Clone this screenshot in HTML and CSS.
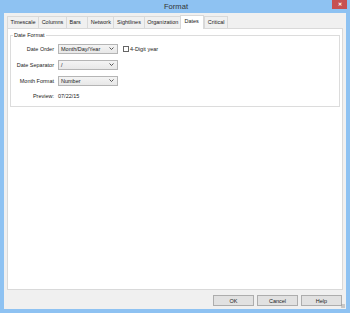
FILE: index.html
```html
<!DOCTYPE html>
<html>
<head>
    <title>Format</title>
    <meta charset="UTF-8">
    <link rel="stylesheet" href="styles.css">
</head>
<body>
    <div class="window">
        <div class="titlebar">
            <span></span>
            <span class="title">Format</span>
            <span class="close">&#x2715;</span>
        </div>
        <div class="client">
            <div class="tabs">
                <div class="tab">Timescale</div>
                <div class="tab">Columns</div>
                <div class="tab">Bars</div>
                <div class="tab">Network</div>
                <div class="tab">Sightlines</div>
                <div class="tab">Organization</div>
                <div class="tab active">Dates</div>
                <div class="tab">Critical</div>
            </div>
            <div class="panel">
                <fieldset class="group">
                    <legend>Date Format</legend>
                    <div class="row first">
                        <label class="lbl">Date Order</label>
                        <div class="combo">
                            <span>Month/Day/Year</span>
                            <svg class="chev" width="5" height="3" viewBox="0 0 5 3"><polyline points="0.5,0.5 2.5,2.5 4.5,0.5" fill="none" stroke="#444" stroke-width="0.9"/></svg>
                        </div>
                        <span class="check"><span class="box"></span>4-Digit year</span>
                    </div>
                    <div class="row">
                        <label class="lbl">Date Separator</label>
                        <div class="combo">
                            <span>/</span>
                            <svg class="chev" width="5" height="3" viewBox="0 0 5 3"><polyline points="0.5,0.5 2.5,2.5 4.5,0.5" fill="none" stroke="#444" stroke-width="0.9"/></svg>
                        </div>
                    </div>
                    <div class="row">
                        <label class="lbl">Month Format</label>
                        <div class="combo">
                            <span>Number</span>
                            <svg class="chev" width="5" height="3" viewBox="0 0 5 3"><polyline points="0.5,0.5 2.5,2.5 4.5,0.5" fill="none" stroke="#444" stroke-width="0.9"/></svg>
                        </div>
                    </div>
                    <div class="row preview">
                        <label class="lbl">Preview:</label>
                        <span>07/22/15</span>
                    </div>
                </fieldset>
            </div>
            <div class="footer">
                <button class="btn">OK</button>
                <button class="btn">Cancel</button>
                <button class="btn">Help</button>
                <span class="grip"></span>
            </div>
        </div>
    </div>
</body>
</html>
```

FILE: styles.css
```css
body {
    margin: 0;
    background: #8ec2f2;
    font-family: 'Liberation Sans', Arial, sans-serif;
    font-size: 5.5px;
    color: #222;
}
.window {
    width: 350px;
    height: 313px;
    display: flex;
    flex-direction: column;
}
.titlebar {
    height: 13px;
    flex: none;
    display: grid;
    grid-template-columns: 1fr auto 1fr;
    align-items: start;
}
.title {
    font-size: 7.6px;
    color: #333;
    line-height: 14px;
    padding-left: 2px;
}
.close {
    justify-self: end;
    width: 15px;
    height: 9px;
    margin-right: 3px;
    background: #c75050;
    color: #fff;
    font-size: 5px;
    font-weight: bold;
    line-height: 9px;
    text-align: center;
}
.client {
    flex: 1;
    margin: 0 4px 4px 4px;
    background: #f0f0f0;
    padding: 3px 3px 0 3px;
    display: flex;
    flex-direction: column;
    position: relative;
}
.tabs {
    display: flex;
    flex: none;
    height: 12px;
    align-items: flex-end;
}
.tab {
    height: 11px;
    line-height: 11px;
    padding: 0 2.6px;
    min-width: 15px;
    border: 1px solid #d9d9d9;
    border-bottom: none;
    margin-right: -1px;
    background: #f0f0f0;
}
.tab.active {
    height: 13px;
    background: #fff;
    padding: 0 3.6px;
    margin: 0 0 -1px -1px;
    position: relative;
    z-index: 1;
    line-height: 11px;
}
.panel {
    flex: 1;
    background: #fff;
    border: 1px solid #d9d9d9;
    padding: 3px 2px 0 2px;
}
.group {
    margin: 0;
    border: 1px solid #dcdcdc;
    padding: 0 0 5px 0;
}
.group legend {
    padding: 0 1px;
    margin-left: 2px;
}
.row {
    display: flex;
    align-items: center;
    height: 11px;
    margin-top: 5px;
}
.row.first {
    margin-top: 5px;
}
.lbl {
    width: 43px;
    text-align: right;
    margin-right: 4px;
    white-space: nowrap;
}
.combo {
    box-sizing: border-box;
    width: 60px;
    height: 10px;
    border: 1px solid #b5b5b5;
    background: linear-gradient(#f4f4f4, #e8e8e8);
    display: flex;
    justify-content: space-between;
    align-items: center;
    padding: 0 3px 0 2px;
}
.check {
    display: flex;
    align-items: center;
    margin-left: 5px;
}
.box {
    width: 4px;
    height: 4px;
    border: 1px solid #666;
    background: #fff;
    margin-right: 1px;
}
.preview {
    margin-top: 4px;
}
.footer {
    display: flex;
    flex: none;
    height: 19px;
    box-sizing: border-box;
    justify-content: flex-end;
    gap: 3px;
    padding: 5px 1px 0 0;
}
.btn {
    width: 41px;
    height: 11px;
    padding: 0;
    border: 1px solid #adadad;
    background: #e1e1e1;
    font-family: inherit;
    font-size: 5.5px;
    color: #222;
}
.grip {
    position: absolute;
    right: 1px;
    bottom: 1px;
    width: 4px;
    height: 4px;
    background: radial-gradient(circle, #999 0.6px, transparent 0.8px) 0 0 / 2px 2px;
}
```
